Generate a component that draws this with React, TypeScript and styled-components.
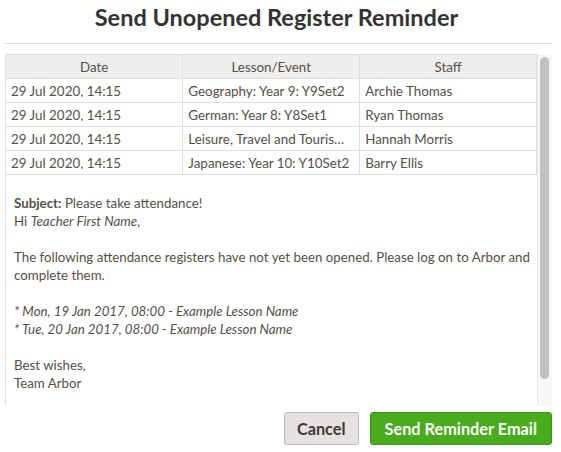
import React from 'react';
import styled, { createGlobalStyle } from 'styled-components';

const GlobalStyle = createGlobalStyle`
  body {
    margin: 0;
    background: #fff;
    font-family: Lato, "Open Sans", sans-serif;
    color: #555049;
  }
`

const Modal = styled.div`
  width: 561px;
  height: 452px;
  padding: 0 9px 0 5px;
  box-sizing: border-box;
  display: flex;
  flex-direction: column;
`
const Title = styled.h1`
  margin: 0;
  padding-right: 4px;
  height: 44px;
  line-height: 34px;
  font-size: 23.5px;
  font-weight: 700;
  color: #333;
  text-align: center;
  border-bottom: 1px solid #dcdcdc;
  box-sizing: border-box;
`
const ScrollArea = styled.div`
  margin-top: 10px;
  height: 352px;
  display: flex;
  border-left: 1px solid #e2e2e2;
`
const ScrollContent = styled.div`
  flex: 1;
  min-width: 0;
  overflow: hidden;
`
const ScrollTrack = styled.div`
  width: 15px;
  flex-shrink: 0;
  background: #f7f7f7;
  border-left: 1px solid #e8e8e8;
  box-sizing: border-box;
  padding: 3px 3px 0 2px;
`
const ScrollThumb = styled.div`
  height: 322px;
  border-radius: 5px;
  background: #c1c1c1;
`
const Table = styled.table`
  width: 100%;
  table-layout: fixed;
  border-collapse: collapse;
  font-size: 13.4px;
`
const HeadCell = styled.th`
  height: 23px;
  padding: 0 5px;
  background: #efeeed;
  border: 1px solid #dedede;
  border-left: none;
  font-weight: 400;
  text-align: center;
  color: #555049;
`
const Cell = styled.td`
  height: 23px;
  padding: 0 5px;
  border: 1px solid #dedede;
  border-left: none;
  white-space: nowrap;
  overflow: hidden;
  text-overflow: ellipsis;
`
const Email = styled.div`
  padding: 19px 0 52px 8px;
  font-size: 13.3px;
  line-height: 18px;
`
const Line = styled.p<{ $gap?: boolean }>`
  margin: 0;
  margin-top: ${({ $gap }) => ($gap ? '18px' : '0')};
`
const Footer = styled.div`
  display: flex;
  justify-content: flex-end;
  gap: 11px;
  margin-top: 6px;
`
const Button = styled.button<{ $primary?: boolean }>`
  height: 33px;
  padding: 0 ${({ $primary }) => ($primary ? '14px' : '12px')};
  border-radius: 3px;
  font-family: Lato, "Open Sans", sans-serif;
  font-size: 16.3px;
  font-weight: 700;
  cursor: pointer;
  background: ${({ $primary }) => ($primary ? '#49ac1c' : '#e5e1e0')};
  color: ${({ $primary }) => ($primary ? '#fff' : '#3d3935')};
  border: 1px solid ${({ $primary }) => ($primary ? '#3c9417' : '#bdb9b8')};
`

const rows = [
  { date: '29 Jul 2020, 14:15', lesson: 'Geography: Year 9: Y9Set2', staff: 'Archie Thomas' },
  { date: '29 Jul 2020, 14:15', lesson: 'German: Year 8: Y8Set1', staff: 'Ryan Thomas' },
  { date: '29 Jul 2020, 14:15', lesson: 'Leisure, Travel and Tourism: Year 11: Y11Set1', staff: 'Hannah Morris' },
  { date: '29 Jul 2020, 14:15', lesson: 'Japanese: Year 10: Y10Set2', staff: 'Barry Ellis' },
]

export default function App() {
  return (
    <>
      <GlobalStyle />
      <Modal>
        <Title>Send Unopened Register Reminder</Title>
        <ScrollArea>
          <ScrollContent>
            <Table>
              <thead>
                <tr>
                  <HeadCell>Date</HeadCell>
                  <HeadCell>Lesson/Event</HeadCell>
                  <HeadCell>Staff</HeadCell>
                </tr>
              </thead>
              <tbody>
                {rows.map((r, i) => (
                  <tr key={i}>
                    <Cell>{r.date}</Cell>
                    <Cell>{r.lesson}</Cell>
                    <Cell>{r.staff}</Cell>
                  </tr>
                ))}
              </tbody>
            </Table>
            <Email>
              <Line><b>Subject:</b> Please take attendance!</Line>
              <Line>Hi <i>Teacher First Name</i>,</Line>
              <Line $gap>
                The following attendance registers have not yet been opened. Please log on to Arbor and
                complete them.
              </Line>
              <Line $gap><i>* Mon, 19 Jan 2017, 08:00 - Example Lesson Name</i></Line>
              <Line><i>* Tue, 20 Jan 2017, 08:00 - Example Lesson Name</i></Line>
              <Line $gap>Best wishes,</Line>
              <Line>Team Arbor</Line>
            </Email>
          </ScrollContent>
          <ScrollTrack>
            <ScrollThumb />
          </ScrollTrack>
        </ScrollArea>
        <Footer>
          <Button>Cancel</Button>
          <Button $primary>Send Reminder Email</Button>
        </Footer>
      </Modal>
    </>
  )
}
